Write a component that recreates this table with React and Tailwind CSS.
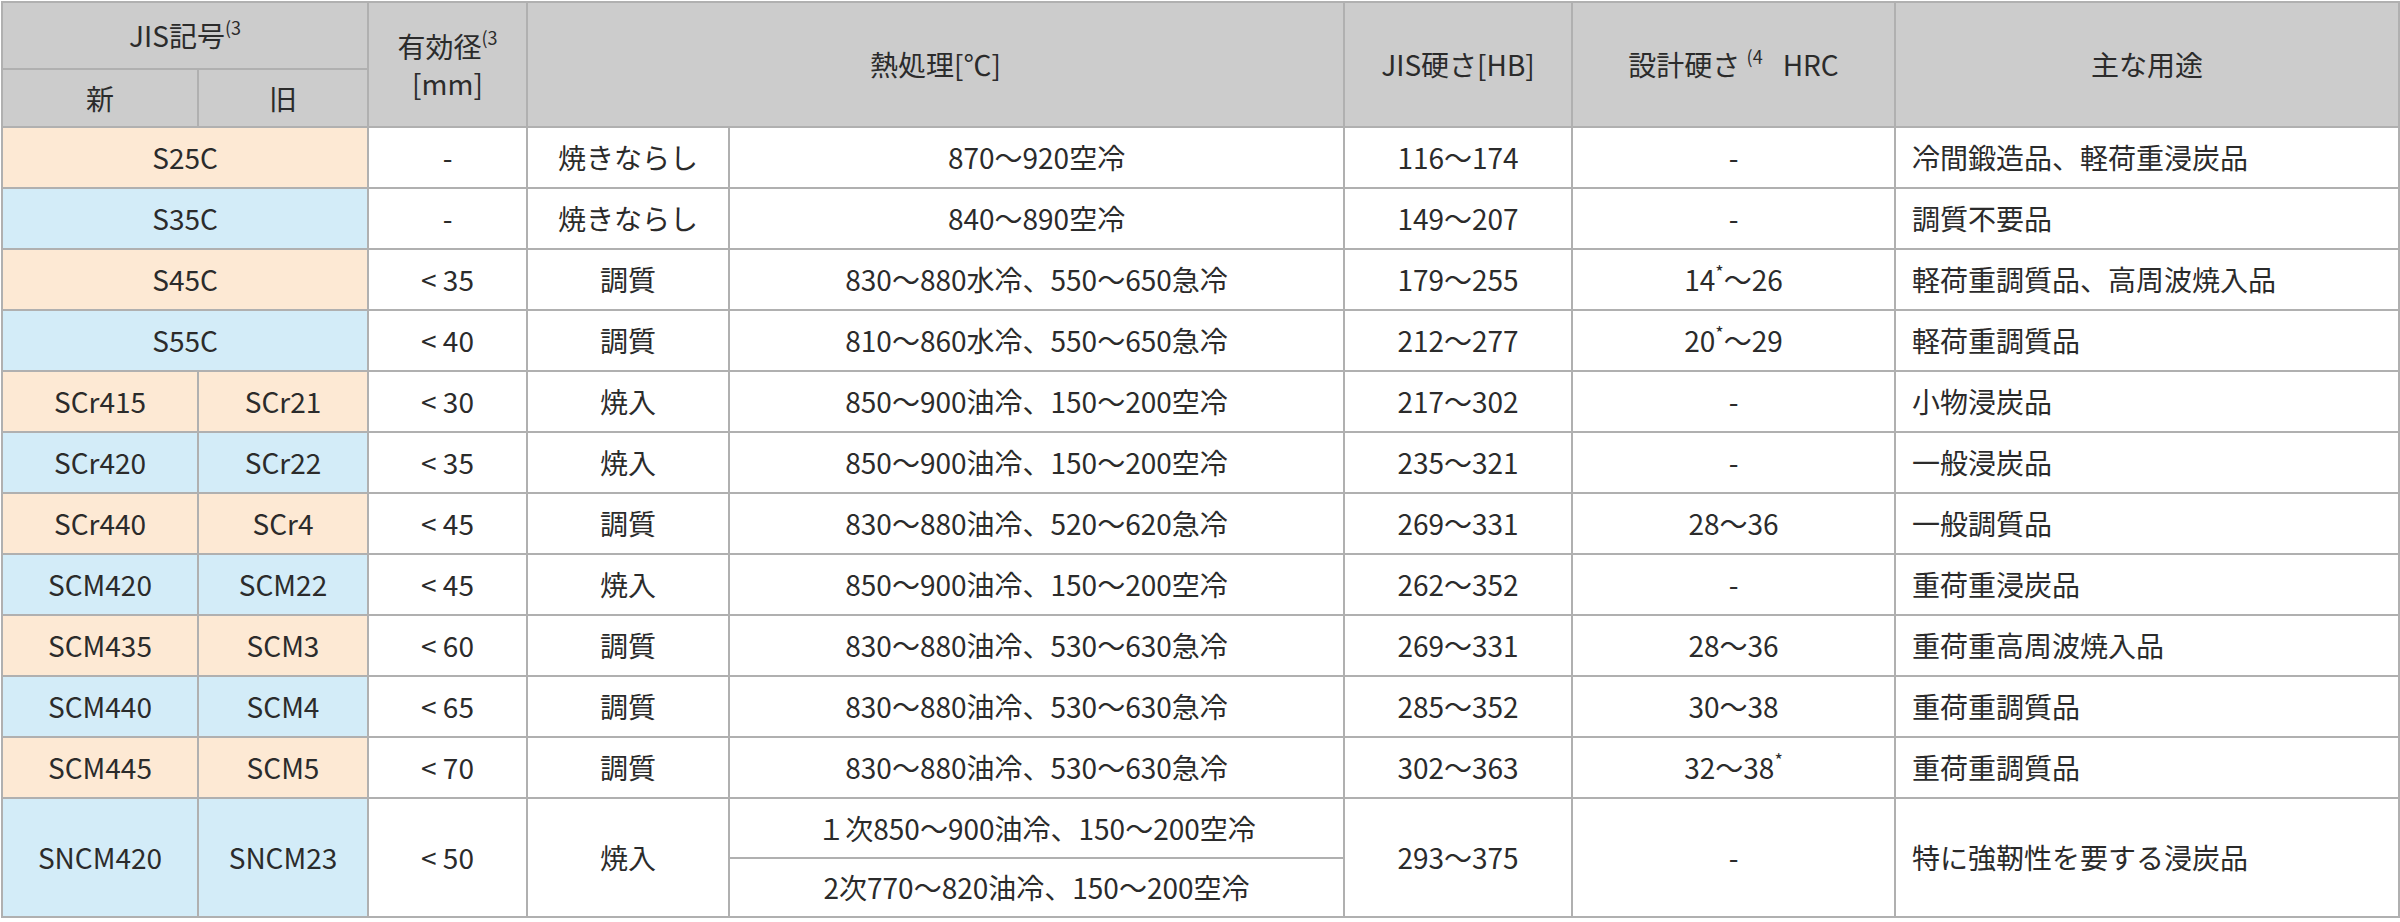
import React from 'react';

const Sup = ({ children }) => (
  <sup className="text-[18px] relative -top-[2px] align-super leading-none">{children}</sup>
);

const rows = [
  { neu: 'S25C', dia: '-', treat: '焼きならし', temp: '870～920空冷', hb: '116～174', hrc: '-', use: '冷間鍛造品、軽荷重浸炭品', tone: 'o' },
  { neu: 'S35C', dia: '-', treat: '焼きならし', temp: '840～890空冷', hb: '149～207', hrc: '-', use: '調質不要品', tone: 'b' },
  { neu: 'S45C', dia: '< 35', treat: '調質', temp: '830～880水冷、550～650急冷', hb: '179～255', hrc: <>14<Sup>*</Sup>～26</>, use: '軽荷重調質品、高周波焼入品', tone: 'o' },
  { neu: 'S55C', dia: '< 40', treat: '調質', temp: '810～860水冷、550～650急冷', hb: '212～277', hrc: <>20<Sup>*</Sup>～29</>, use: '軽荷重調質品', tone: 'b' },
  { neu: 'SCr415', old: 'SCr21', dia: '< 30', treat: '焼入', temp: '850～900油冷、150～200空冷', hb: '217～302', hrc: '-', use: '小物浸炭品', tone: 'o' },
  { neu: 'SCr420', old: 'SCr22', dia: '< 35', treat: '焼入', temp: '850～900油冷、150～200空冷', hb: '235～321', hrc: '-', use: '一般浸炭品', tone: 'b' },
  { neu: 'SCr440', old: 'SCr4', dia: '< 45', treat: '調質', temp: '830～880油冷、520～620急冷', hb: '269～331', hrc: '28～36', use: '一般調質品', tone: 'o' },
  { neu: 'SCM420', old: 'SCM22', dia: '< 45', treat: '焼入', temp: '850～900油冷、150～200空冷', hb: '262～352', hrc: '-', use: '重荷重浸炭品', tone: 'b' },
  { neu: 'SCM435', old: 'SCM3', dia: '< 60', treat: '調質', temp: '830～880油冷、530～630急冷', hb: '269～331', hrc: '28～36', use: '重荷重高周波焼入品', tone: 'o' },
  { neu: 'SCM440', old: 'SCM4', dia: '< 65', treat: '調質', temp: '830～880油冷、530～630急冷', hb: '285～352', hrc: '30～38', use: '重荷重調質品', tone: 'b' },
  { neu: 'SCM445', old: 'SCM5', dia: '< 70', treat: '調質', temp: '830～880油冷、530～630急冷', hb: '302～363', hrc: <>32～38<Sup>*</Sup></>, use: '重荷重調質品', tone: 'o' },
];

const cell = 'border-2 border-[#b0b0b0] text-center align-middle p-0';
const toneClass = { o: 'bg-[#fde9d4]', b: 'bg-[#d3ecf8]' };

export default function App() {
  return (
    <div className="bg-white w-[2400px] h-[922px] pt-[1px] pl-[1px] text-[#2b2b2b] font-['Noto_Sans_CJK_JP',sans-serif] text-[28px] leading-[37px]">
      <table className="table-fixed border-collapse w-[2397px]">
        <colgroup>
          <col className="w-[196px]" />
          <col className="w-[170px]" />
          <col className="w-[159px]" />
          <col className="w-[202px]" />
          <col className="w-[615px]" />
          <col className="w-[228px]" />
          <col className="w-[323px]" />
          <col className="w-[504px]" />
        </colgroup>
        <thead className="bg-[#cccccc]">
          <tr className="h-[67px]">
            <th colSpan={2} className={`${cell} font-normal`}>JIS記号<Sup>(3</Sup></th>
            <th rowSpan={2} className={`${cell} font-normal`}>
              <div>有効径<Sup>(3</Sup></div>
              <div>[mm]</div>
            </th>
            <th rowSpan={2} colSpan={2} className={`${cell} font-normal`}>熱処理[℃]</th>
            <th rowSpan={2} className={`${cell} font-normal`}>JIS硬さ[HB]</th>
            <th rowSpan={2} className={`${cell} font-normal`}>
              設計硬さ <Sup>(4</Sup><span className="ml-[20px]">HRC</span>
            </th>
            <th rowSpan={2} className={`${cell} font-normal`}>主な用途</th>
          </tr>
          <tr className="h-[58px]">
            <th className={`${cell} font-normal`}>新</th>
            <th className={`${cell} font-normal`}>旧</th>
          </tr>
        </thead>
        <tbody>
          {rows.map((r) => (
            <tr key={r.neu} className="h-[61px]">
              {r.old ? (
                <>
                  <td className={`${cell} ${toneClass[r.tone]}`}>{r.neu}</td>
                  <td className={`${cell} ${toneClass[r.tone]}`}>{r.old}</td>
                </>
              ) : (
                <td colSpan={2} className={`${cell} ${toneClass[r.tone]}`}>{r.neu}</td>
              )}
              <td className={cell}>{r.dia}</td>
              <td className={cell}>{r.treat}</td>
              <td className={cell}>{r.temp}</td>
              <td className={cell}>{r.hb}</td>
              <td className={cell}>{r.hrc}</td>
              <td className={`${cell} text-left pl-[16px]`}>{r.use}</td>
            </tr>
          ))}
          <tr className="h-[60px]">
            <td rowSpan={2} className={`${cell} bg-[#d3ecf8]`}>SNCM420</td>
            <td rowSpan={2} className={`${cell} bg-[#d3ecf8]`}>SNCM23</td>
            <td rowSpan={2} className={cell}>&lt; 50</td>
            <td rowSpan={2} className={cell}>焼入</td>
            <td className={cell}>１次850～900油冷、150～200空冷</td>
            <td rowSpan={2} className={cell}>293～375</td>
            <td rowSpan={2} className={cell}>-</td>
            <td rowSpan={2} className={`${cell} text-left pl-[16px]`}>特に強靭性を要する浸炭品</td>
          </tr>
          <tr className="h-[59px]">
            <td className={cell}>2次770～820油冷、150～200空冷</td>
          </tr>
        </tbody>
      </table>
    </div>
  );
}
